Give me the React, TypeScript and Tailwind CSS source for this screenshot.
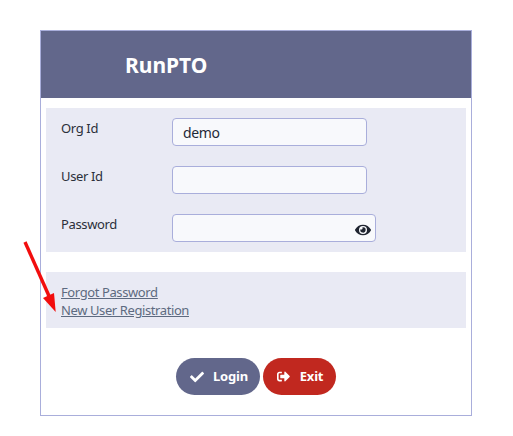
import { FaCheck, FaEye, FaSignOutAlt } from "react-icons/fa";

const inputClass =
  "h-7 rounded border border-[#a9aedb] bg-[#f8f9fc] px-2.5 text-[14px] tracking-[-0.4px] text-[#1f2937] outline-none";

function Field({ label, value, width }: { label: string; value?: string; width: string }) {
  return (
    <div className="flex h-7 items-start">
      <label className="w-[126px] pl-[15px] text-[13px] leading-5 tracking-[-0.35px] text-[#2b2f3a]">{label}</label>
      <input readOnly value={value ?? ""} className={`${inputClass} ${width}`} />
    </div>
  );
}

export default function App() {
  return (
    <div className="relative h-[436px] w-[513px] bg-white pt-[30px] pl-10 font-['Noto_Sans',sans-serif]">
      <div className="h-[386px] w-[432px] border border-[#a9aedb] bg-white">
        <div className="flex h-[67px] items-center bg-[#62678b] pt-[3px] pl-[84px] text-[21px] font-bold text-white">
          RunPTO
        </div>

        <div className="mx-[5px] mt-2.5 flex h-36 flex-col gap-5 bg-[#e9eaf4] pt-2.5">
          <Field label="Org Id" value="demo" width="w-[195px]" />
          <Field label="User Id" width="w-[195px]" />
          <div className="relative">
            <Field label="Password" width="w-[204px]" />
            <FaEye className="absolute top-[8px] left-[309px] h-4 w-4 text-[#1f2430]" />
          </div>
        </div>

        <div className="mx-[5px] mt-5 flex h-14 flex-col justify-center bg-[#e9eaf4] pt-[2px] pl-[15px] text-[13px] leading-[18px] tracking-[-0.4px] text-[#5d6a80] underline">
          <a href="#">Forgot Password</a>
          <a href="#">New User Registration</a>
        </div>

        <div className="mt-[30px] flex justify-center gap-[3px]">
          <button className="flex h-[37px] w-[84px] items-center justify-center gap-[9px] rounded-full bg-[#62678b] pl-[2px] text-[13px] font-bold tracking-[-0.2px] text-white">
            <FaCheck className="h-[14px] w-[14px]" />
            Login
          </button>
          <button className="flex h-[37px] w-[73px] items-center justify-center gap-[10px] rounded-full bg-[#c1281f] pl-[1px] text-[13px] font-bold tracking-[-0.2px] text-white">
            <FaSignOutAlt className="h-[13px] w-[13px]" />
            Exit
          </button>
        </div>
      </div>

      {/* red annotation arrow drawn over the page */}
      <svg className="absolute top-[238px] left-[20px] h-[90px] w-[40px]" viewBox="0 0 40 90">
        <line x1="5" y1="4" x2="29" y2="58" stroke="#f20d0d" strokeWidth="3.4" />
        <polygon points="35.7,74 23,60 34,55" fill="#f20d0d" />
      </svg>
    </div>
  );
}
